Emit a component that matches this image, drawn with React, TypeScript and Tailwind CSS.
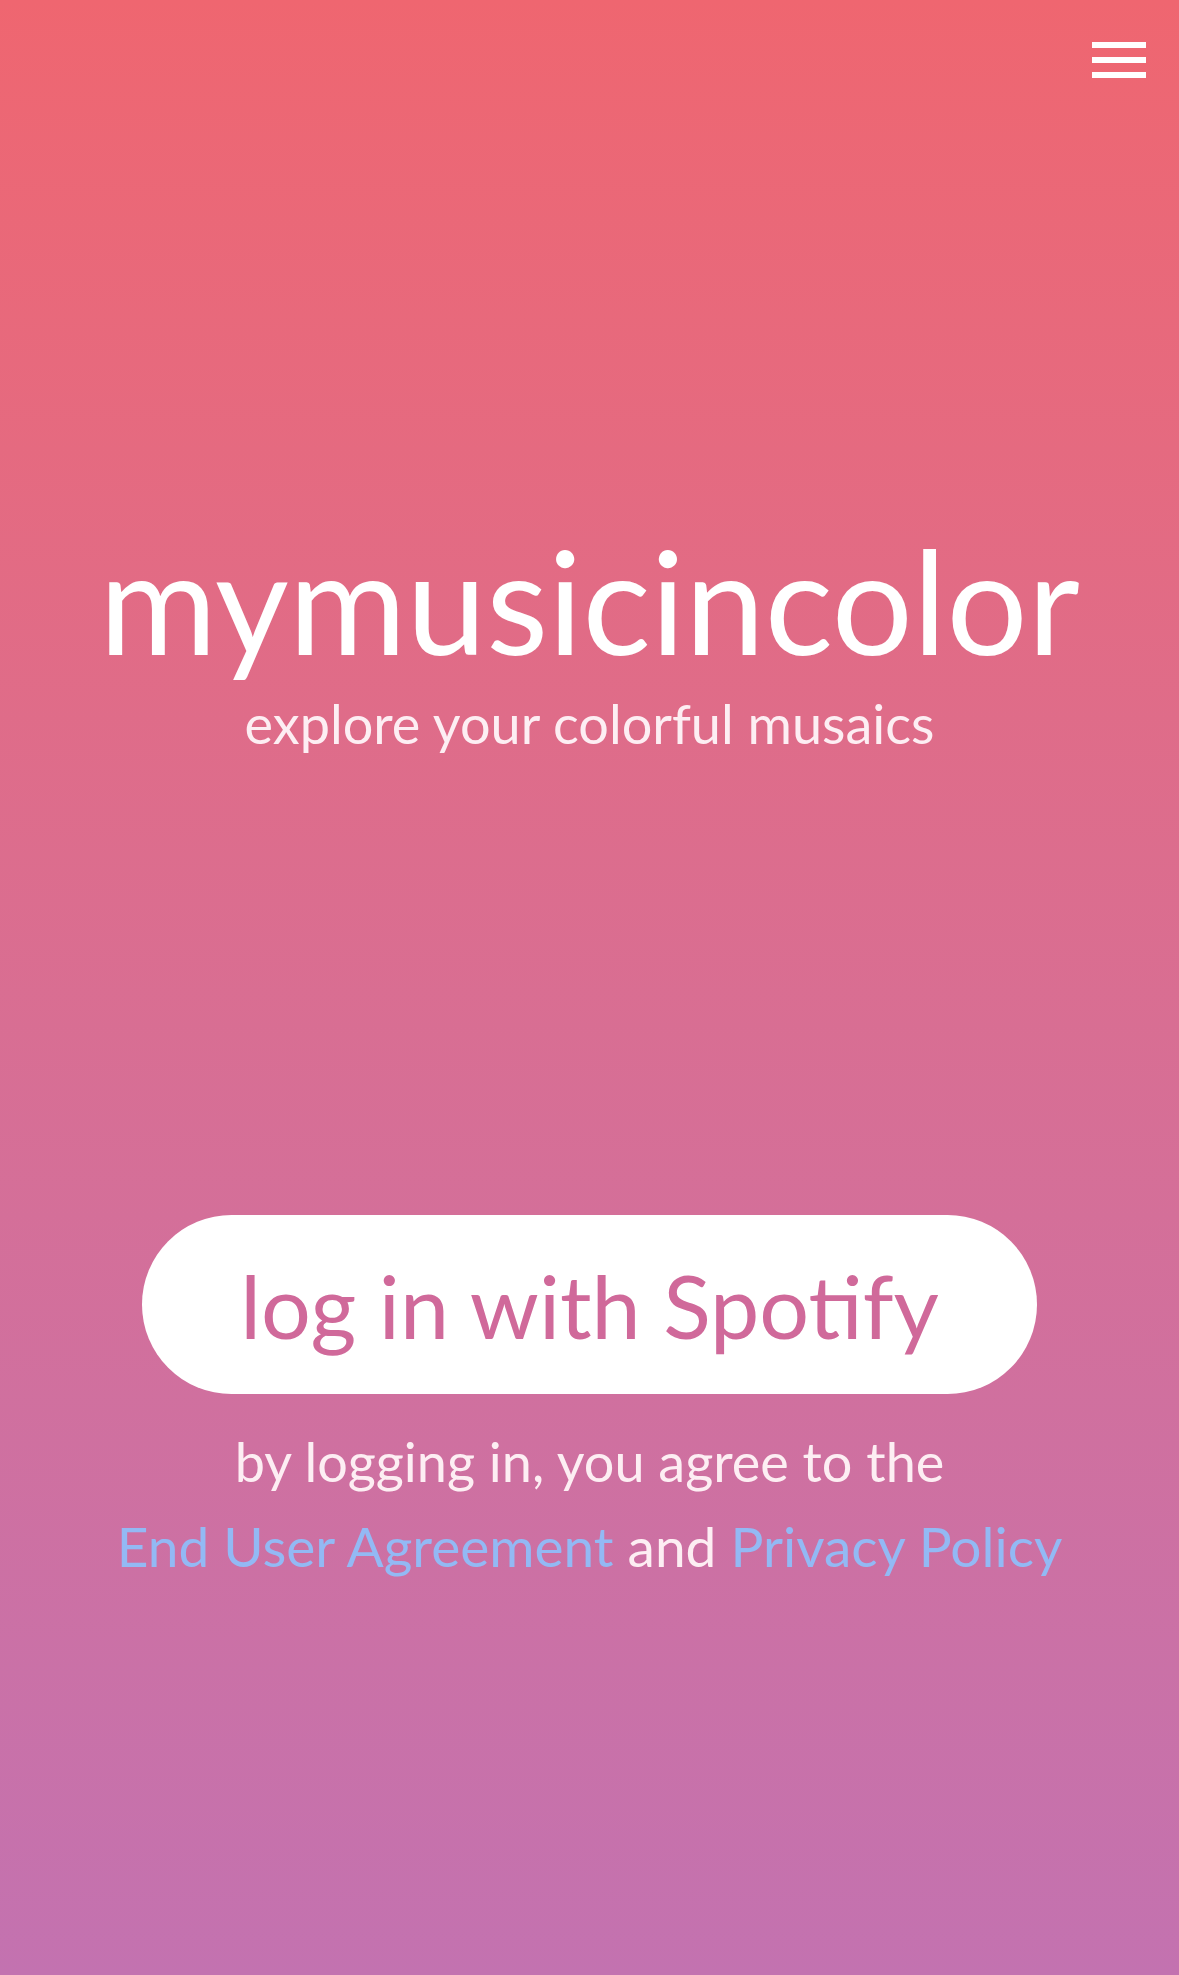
import React from "react";

export default function App() {
  return (
    <div className="min-h-[1975px] w-full bg-linear-to-b from-[#ef6670] to-[#c372b0] font-[family-name:Lato,sans-serif] flex flex-col">
      <header className="flex justify-end pt-[42px] pr-[33px]">
        <button aria-label="menu" className="flex flex-col gap-[9px]">
          <span className="block w-[54px] h-[6px] bg-white" />
          <span className="block w-[54px] h-[6px] bg-white" />
          <span className="block w-[54px] h-[6px] bg-white" />
        </button>
      </header>

      <main className="flex flex-col items-center">
        <h1 className="mt-[450px] text-[143px] leading-none font-normal text-white">mymusicincolor</h1>
        <p className="mt-[26px] text-[54px] leading-none text-[#fdeef3]">explore your colorful musaics</p>

        <button className="mt-[464px] w-[895px] h-[179px] rounded-full bg-white flex items-center justify-center">
          <span className="text-[88px] leading-none text-[#d0699a]">log in with Spotify</span>
        </button>

        <div className="mt-[25px] flex flex-col items-center leading-[85px] text-[#fdeef3]">
          <p className="text-[54px]">by logging in, you agree to the</p>
          <p className="text-[55px]">
            <a href="#" className="text-[#93b9f4]">End User Agreement</a>
            <span> and </span>
            <a href="#" className="text-[#93b9f4]">Privacy Policy</a>
          </p>
        </div>
      </main>
    </div>
  );
}
